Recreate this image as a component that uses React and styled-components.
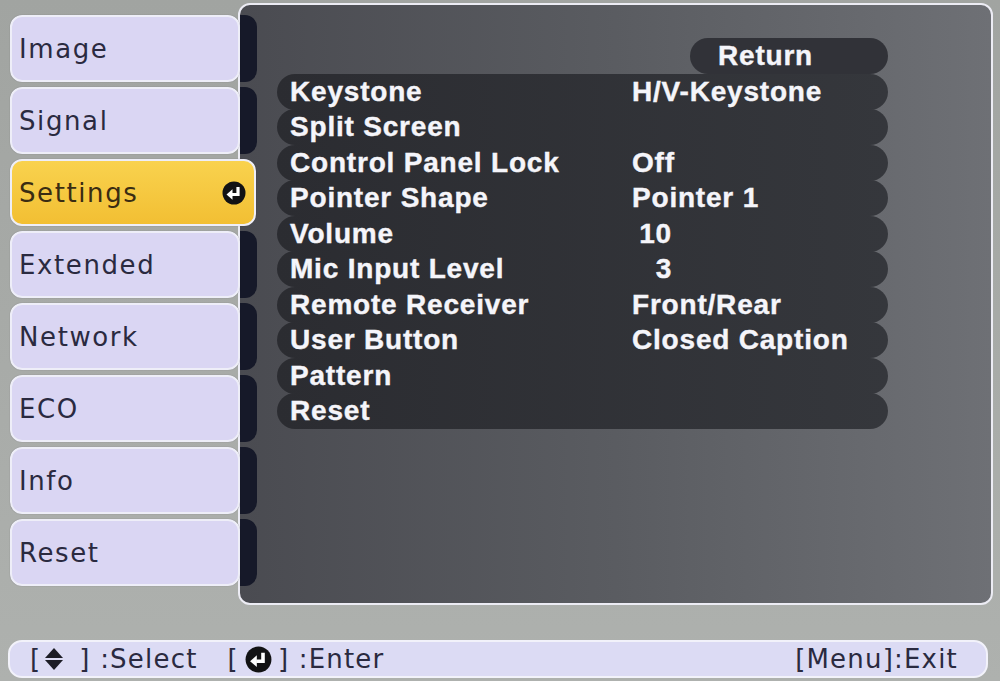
import React from "react";
import styled, { createGlobalStyle } from "styled-components";

const Global = createGlobalStyle`
  html, body { margin: 0; padding: 0; background: #a7aaa7; }
  body { width: 1000px; height: 681px; overflow: hidden; font-family: "DejaVu Sans", sans-serif; }
`;

const Screen = styled.div`
  width: 1000px;
  height: 681px;
  box-sizing: border-box;
  padding-top: 3px;
  background: linear-gradient(180deg, #a1a4a1, #aeb1ae);
  display: flex;
  flex-direction: column;
`;

const Main = styled.div`
  display: flex;
  align-items: flex-start;
`;

const Sidebar = styled.nav`
  width: 230px;
  margin: 12px -2px 0 10px;
  display: flex;
  flex-direction: column;
  gap: 5px;
`;

const Tab = styled.div`
  box-sizing: border-box;
  height: 67px;
  width: ${(p) => (p.$active ? "246px" : "100%")};
  position: relative;
  z-index: ${(p) => (p.$active ? 2 : 0)};
  display: flex;
  align-items: center;
  justify-content: space-between;
  padding: 0 8px 0 7px;
  border: 2px solid #eeeef8;
  border-radius: 12px;
  background: ${(p) =>
    p.$active ? "linear-gradient(180deg, #f9d24e, #f2bf33)" : "#dad6f3"};
  color: ${(p) => (p.$active ? "#3a2c12" : "#2a2a40")};
  font-size: 26px;
  letter-spacing: 1.6px;
  box-shadow: 0 0 1px rgba(0, 0, 0, 0.35);
`;

const Panel = styled.section`
  box-sizing: border-box;
  width: 755px;
  height: 602px;
  border: 2px solid #ececf4;
  border-radius: 12px;
  background: linear-gradient(90deg, #4a4b51 0%, #5a5c61 50%, #6e7075 100%);
  display: flex;
  overflow: hidden;
`;

const NubColumn = styled.div`
  width: 17px;
  padding-top: 10px;
  display: flex;
  flex-direction: column;
  gap: 5px;
`;

const Nub = styled.div`
  height: 67px;
  border-radius: 0 12px 12px 0;
  background: ${(p) => (p.$hidden ? "transparent" : "#161929")};
`;

const Content = styled.div`
  width: 611px;
  padding: 33px 0 0 20px;
  display: flex;
  flex-direction: column;
`;

const ReturnRow = styled.div`
  display: flex;
  justify-content: flex-end;
`;

const ReturnPill = styled.div`
  box-sizing: border-box;
  width: 198px;
  height: 36px;
  border-radius: 18px;
  background: #313238;
  padding-left: 28px;
  display: flex;
  align-items: center;
  color: #f5f5fa;
  font-family: "Liberation Sans", Arial, sans-serif;
  font-weight: 700;
  font-size: 28px;
  letter-spacing: 0.8px;
  -webkit-text-stroke: 0.4px #f5f5fa;
`;

const Row = styled.div`
  box-sizing: border-box;
  height: 36px;
  margin-top: -0.5px;
  border-radius: 18px;
  background: linear-gradient(90deg, #2b2c31, #35373c);
  padding-left: 13px;
  display: grid;
  grid-template-columns: 342px 1fr;
  align-items: center;
  color: #f5f5fa;
  font-family: "Liberation Sans", Arial, sans-serif;
  font-weight: 700;
  font-size: 28px;
  letter-spacing: 0.8px;
  white-space: nowrap;
  -webkit-text-stroke: 0.4px #f5f5fa;
`;

const Value = styled.span`
  width: ${(p) => (p.$num ? "40px" : "auto")};
  text-align: ${(p) => (p.$num ? "right" : "left")};
`;

const Footer = styled.footer`
  box-sizing: border-box;
  margin: 35px 0 0 8px;
  width: 980px;
  height: 38px;
  border: 2px solid #f2f2fa;
  border-radius: 14px;
  background: #dcdbf4;
  display: flex;
  align-items: center;
  justify-content: space-between;
  padding: 0 28px 0 20px;
  font-size: 26px;
  letter-spacing: 1.2px;
  color: #2a2a40;
  white-space: nowrap;
`;

const HintGroup = styled.div`
  display: flex;
  align-items: center;
  gap: 30px;
`;

const Hint = styled.span`
  display: flex;
  align-items: center;
`;

const IconWrap = styled.span`
  display: inline-flex;
  margin: 0 ${(p) => p.$right}px 0 ${(p) => p.$left}px;
`;

const EnterIcon = ({ size = 24 }) => (
  <svg width={size} height={size} viewBox="0 0 24 24">
    <circle cx="12" cy="12" r="11.5" fill="#121214" />
    <path d="M16 6 V13.5 H10" stroke="#fff" strokeWidth="3.2" fill="none" />
    <path d="M4.5 13.5 L10.5 8.3 L10.5 18.7 Z" fill="#fff" />
  </svg>
);

const UpDownIcon = () => (
  <svg width="20" height="24" viewBox="0 0 20 24">
    <path d="M10 1 L19 11 L1 11 Z" fill="#1c1c26" />
    <path d="M1 13 L19 13 L10 23 Z" fill="#1c1c26" />
  </svg>
);

const tabs = ["Image", "Signal", "Settings", "Extended", "Network", "ECO", "Info", "Reset"];
const activeTab = 2;

const rows = [
  ["Keystone", "H/V-Keystone"],
  ["Split Screen", ""],
  ["Control Panel Lock", "Off"],
  ["Pointer Shape", "Pointer 1"],
  ["Volume", "10", true],
  ["Mic Input Level", "3", true],
  ["Remote Receiver", "Front/Rear"],
  ["User Button", "Closed Caption"],
  ["Pattern", ""],
  ["Reset", ""],
];

export default function App() {
  return (
    <>
      <Global />
      <Screen>
        <Main>
          <Sidebar>
            {tabs.map((t, i) => (
              <Tab key={t} $active={i === activeTab}>
                <span>{t}</span>
                {i === activeTab && <EnterIcon size={24} />}
              </Tab>
            ))}
          </Sidebar>
          <Panel>
            <NubColumn>
              {tabs.map((t, i) => (
                <Nub key={t} $hidden={i === activeTab} />
              ))}
            </NubColumn>
            <Content>
              <ReturnRow>
                <ReturnPill>Return</ReturnPill>
              </ReturnRow>
              {rows.map(([label, value, num]) => (
                <Row key={label}>
                  <span>{label}</span>
                  <Value $num={num}>{value}</Value>
                </Row>
              ))}
            </Content>
          </Panel>
        </Main>
        <Footer>
          <HintGroup>
            <Hint>
              [<IconWrap $left={3} $right={15}><UpDownIcon /></IconWrap>] :Select
            </Hint>
            <Hint>
              [<IconWrap $left={6} $right={6}><EnterIcon size={27} /></IconWrap>] :Enter
            </Hint>
          </HintGroup>
          <Hint>[Menu]:Exit</Hint>
        </Footer>
      </Screen>
    </>
  );
}
